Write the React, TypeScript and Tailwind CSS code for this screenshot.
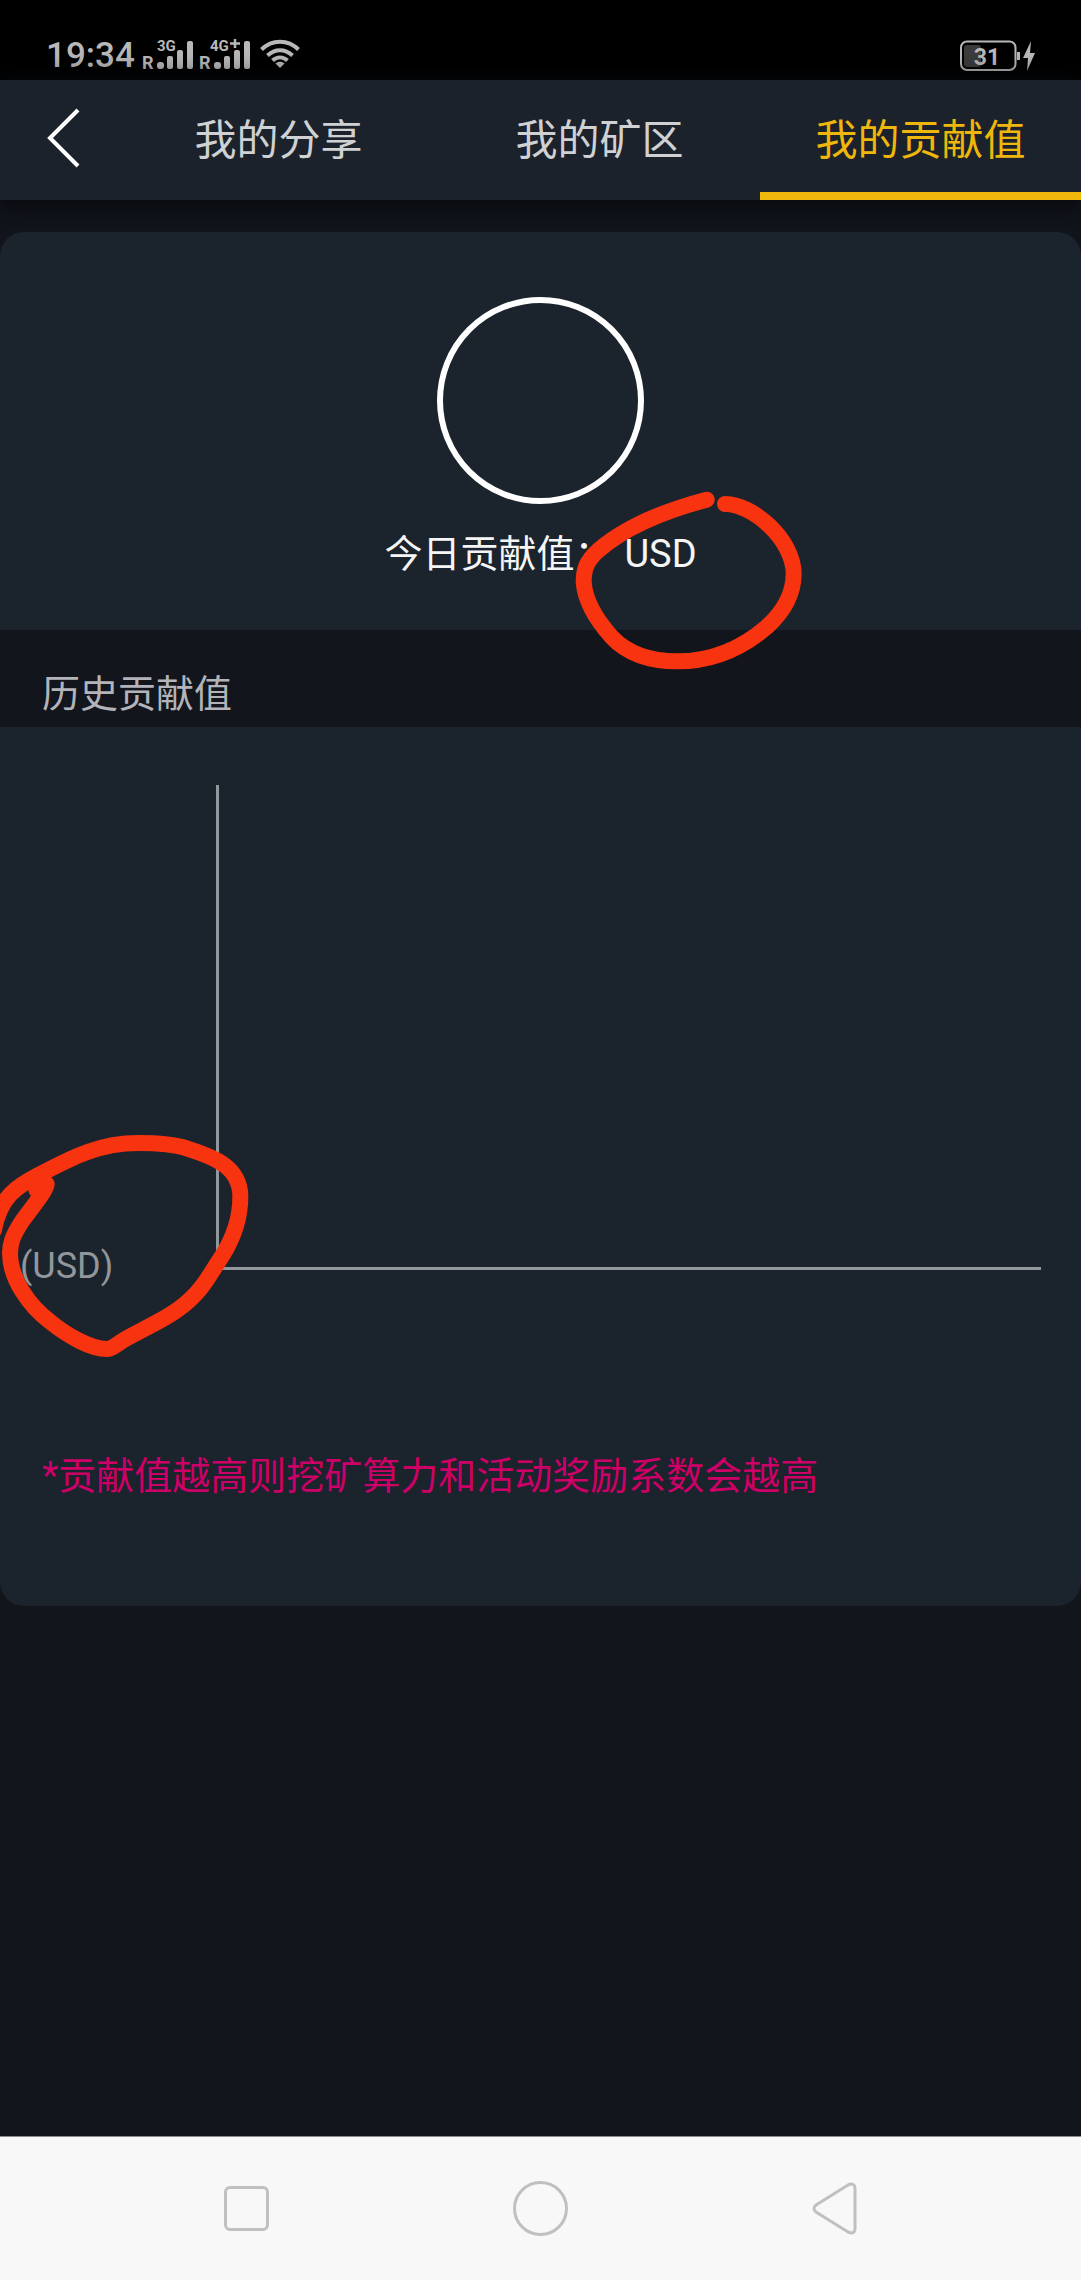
import { useState } from 'react';

const tabs = ['我的分享', '我的矿区', '我的贡献值'];

function SignalIcons() {
  return (
    <svg width="160" height="34" viewBox="142 38 160 34" fill="#b9b9b9" aria-label="移动网络与 Wi-Fi">
      <g fontFamily="Roboto, sans-serif" fontWeight="700">
        <text x="142" y="69" fontSize="18">R</text>
        <text x="157" y="51" fontSize="15">3G</text>
        <text x="199" y="69" fontSize="18">R</text>
        <text x="210" y="51" fontSize="15">4G</text>
      </g>
      <path d="M230 43.500h10M235 39v9" stroke="#b9b9b9" strokeWidth="2.500" />
      <rect x="157" y="62" width="7" height="7" rx="3" />
      <rect x="167" y="56" width="6" height="13" rx="2" />
      <rect x="177" y="50" width="6" height="19" rx="2" />
      <rect x="187" y="41" width="6" height="28" rx="2" />
      <rect x="214" y="62" width="7" height="7" rx="3" />
      <rect x="224" y="56" width="6" height="13" rx="2" />
      <rect x="234" y="50" width="6" height="19" rx="2" />
      <rect x="244" y="41" width="6" height="28" rx="2" />
      <g fill="none" stroke="#b9b9b9" strokeWidth="4">
        <path d="M261.500 49.500C272 39 288 39 298.500 49.500" />
        <path d="M267.500 55.500C275 48.500 285 48.500 292.500 55.500" />
        <path d="M272.500 60.500C277 56.500 283 56.500 287.500 60.500" />
      </g>
      <path d="M275.500 63.500C278.500 61 281.500 61 284.500 63.500L280 68Z" />
    </svg>
  );
}

function Battery() {
  return (
    <svg width="76" height="32" viewBox="961 39 76 32" fill="#b9b9b9" aria-label="电量">
      <rect x="962" y="40.500" width="54.500" height="28.500" rx="6" fill="none" stroke="#b9b9b9" strokeWidth="2" />
      <rect x="965" y="44" width="17" height="22" rx="3" fill="#3c3c3c" />
      <rect x="1018" y="51" width="3" height="8" />
      <text x="988" y="64" textAnchor="middle" fontFamily="Roboto, sans-serif" fontWeight="700" fontSize="23">31</text>
      <path d="M1032 40L1024 57H1029L1028 70L1036 52H1031Z" />
    </svg>
  );
}

export default function App() {
  const [active, setActive] = useState(2);

  return (
    <div className="flex min-h-screen flex-col overflow-x-hidden bg-[#12151c] font-[Roboto,'Noto_Sans_CJK_SC',sans-serif]">
      <div className="flex h-20 items-end justify-between bg-black pr-[45px] pb-2 pl-[46px] text-[#b9b9b9]">
        <div className="flex items-end gap-[7px]">
          <span className="text-[35px] leading-[32px] font-medium">19:34</span>
          <SignalIcons />
        </div>
        <Battery />
      </div>

      <header className="flex h-[120px] bg-[#1c222b] shadow-[0_4px_24px_4px_#07090d]">
        <button type="button" aria-label="返回" className="w-[118px] pb-1 pl-[46px]">
          <svg width="36" height="60" viewBox="0 0 36 60" fill="none" stroke="#fff" strokeWidth="4">
            <path d="M32 2L4 30L32 58" />
          </svg>
        </button>
        <nav className="flex flex-1">
          {tabs.map((tab, i) => (
            <button
              key={tab}
              type="button"
              onClick={() => setActive(i)}
              className={
                i === active
                  ? 'flex-1 border-b-8 border-[#efb70c] pt-2 text-[42px] text-[#efb70c]'
                  : 'flex-1 border-b-8 border-transparent pt-2 text-[42px] text-[#cfd1d3]'
              }
            >
              {tab}
            </button>
          ))}
        </nav>
      </header>

      <main className="flex-1 pt-8">
        <section className="relative z-10 flex flex-col items-center rounded-t-3xl bg-[#1b232c] pt-[65px] pb-12">
          <div className="size-[207px] rounded-full border-6 border-white" />
          <p className="mt-[22px] flex gap-3 text-[38px] leading-[56px] text-[#f5f5f5]">
            <span>今日贡献值：</span>
            <span>USD</span>
          </p>
          <svg
            className="pointer-events-none absolute top-[255px] left-1/2 ml-[29px]"
            width="240"
            height="187"
            viewBox="690 680 720 561"
            fill="none"
            stroke="#f7340f"
            strokeWidth="48"
            strokeLinecap="round"
            aria-hidden="true"
          >
            <path d="M1100 718C960 755 850 805 775 870C740 902 731 925 731 965C735 1025 775 1085 815 1130C862 1180 925 1203 1012 1203C1120 1203 1210 1160 1280 1100C1335 1050 1361 1000 1361 940C1361 840 1240 731 1155 731" />
          </svg>
        </section>

        <h2 className="px-[42px] pt-9 pb-[5px] text-[38px] leading-[56px] text-[#b3b3ba]">历史贡献值</h2>

        <section className="relative rounded-b-3xl bg-[#1b232c] pt-[58px] pb-[102px]">
          <div className="flex items-end pr-10">
            <span className="-mb-5 w-[216px] pl-5 text-[36px] leading-[48px] text-[#92979b]">(USD)</span>
            <div className="h-[485px] flex-1 border-b-3 border-l-3 border-[#92979b]" />
          </div>
          <p className="mt-[178px] px-[42px] text-[38px] leading-[56px] text-[#cc0066]">
            *贡献值越高则挖矿算力和活动奖励系数会越高
          </p>
          <svg
            className="pointer-events-none absolute top-[400px] left-0"
            width="260"
            height="240"
            viewBox="0 81 780 720"
            fill="none"
            stroke="#f7340f"
            strokeWidth="48"
            strokeLinecap="round"
            strokeLinejoin="round"
            aria-hidden="true"
          >
            <path d="M140 252C135 280 85 335 62 370C38 408 30 430 30 460C30 535 85 615 150 665C205 710 275 747 320 747C340 747 350 730 385 712L470 667C530 635 580 600 620 540L665 470C703 410 721 350 721 290C721 200 640 170 560 145C520 132 470 129 415 129C300 129 220 170 125 220C50 258 0 290 -18 390" />
            <path d="M112 238L109 270" />
          </svg>
        </section>
      </main>

      <nav aria-label="系统导航" className="flex h-36 border-t border-[#8c8c8c] bg-[#f8f8f8] px-[99px] text-[#c0c0c0]">
        <button type="button" aria-label="最近任务" className="flex flex-1 items-center justify-center">
          <span className="size-[45px] rounded-md border-3 border-current" />
        </button>
        <button type="button" aria-label="主屏幕" className="flex flex-1 items-center justify-center">
          <span className="size-[55px] rounded-full border-3 border-current" />
        </button>
        <button type="button" aria-label="返回上一页" className="flex flex-1 items-center justify-center">
          <svg width="46" height="54" viewBox="0 0 46 54" fill="none" stroke="currentColor" strokeWidth="3">
            <path d="M4 23L36 3Q43 0 43 7V46Q43 53 36 50L4 30Q0 26.500 4 23Z" />
          </svg>
        </button>
      </nav>
    </div>
  );
}
